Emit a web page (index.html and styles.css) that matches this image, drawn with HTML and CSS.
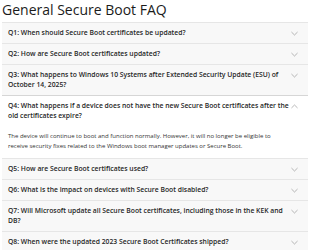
FILE: index.html
```html
<!DOCTYPE html>
<html lang="en">
<head>
<meta charset="utf-8">
<title>General Secure Boot FAQ</title>
<link rel="stylesheet" href="styles.css">
</head>
<body>
<h1 class="title">General Secure Boot FAQ</h1>
<div class="faq">
  <div class="item">
    <div class="q"><span class="qt">Q1: When should Secure Boot certificates be updated?</span><svg class="chev" viewBox="0 0 8 5"><path d="M0.5 0.8 L4 4.2 L7.5 0.8"/></svg></div>
  </div>
  <div class="item">
    <div class="q"><span class="qt">Q2: How are Secure Boot certificates updated?</span><svg class="chev" viewBox="0 0 8 5"><path d="M0.5 0.8 L4 4.2 L7.5 0.8"/></svg></div>
  </div>
  <div class="item">
    <div class="q"><span class="qt">Q3: What happens to Windows 10 Systems after Extended Security Update (ESU) of October 14, 2025?</span><svg class="chev" viewBox="0 0 8 5"><path d="M0.5 0.8 L4 4.2 L7.5 0.8"/></svg></div>
  </div>
  <div class="item open">
    <div class="q"><span class="qt">Q4: What happens if a device does not have the new Secure Boot certificates after the old certificates expire?</span><svg class="chev" viewBox="0 0 8 5"><path d="M0.5 4.2 L4 0.8 L7.5 4.2"/></svg></div>
    <div class="a">The device will continue to boot and function normally. However, it will no longer be eligible to receive security fixes related to the Windows boot manager updates or Secure Boot.</div>
  </div>
  <div class="item">
    <div class="q"><span class="qt">Q5: How are Secure Boot certificates used?</span><svg class="chev" viewBox="0 0 8 5"><path d="M0.5 0.8 L4 4.2 L7.5 0.8"/></svg></div>
  </div>
  <div class="item">
    <div class="q"><span class="qt">Q6: What is the impact on devices with Secure Boot disabled?</span><svg class="chev" viewBox="0 0 8 5"><path d="M0.5 0.8 L4 4.2 L7.5 0.8"/></svg></div>
  </div>
  <div class="item">
    <div class="q"><span class="qt">Q7: Will Microsoft update all Secure Boot certificates, including those in the KEK and DB?</span><svg class="chev" viewBox="0 0 8 5"><path d="M0.5 0.8 L4 4.2 L7.5 0.8"/></svg></div>
  </div>
  <div class="item">
    <div class="q"><span class="qt">Q8: When were the updated 2023 Secure Boot Certificates shipped?</span><svg class="chev" viewBox="0 0 8 5"><path d="M0.5 0.8 L4 4.2 L7.5 0.8"/></svg></div>
  </div>
</div>
</body>
</html>
```
FILE: styles.css
```css
html, body {
  margin: 0;
  padding: 0;
  background: #ffffff;
}
body {
  padding: 0 4px 0 2px;
  font-family: "Open Sans", "Noto Sans", sans-serif;
  color: #1b1b1b;
}
.title {
  margin: 0;
  height: 22px;
  font-size: 14px;
  font-weight: 400;
  line-height: 19px;
}
.faq {
  display: flex;
  flex-direction: column;
}
.item {
  border-top: 1px solid #e6e6e6;
  background: #f8f8f8;
}
.item.open {
  background: #ffffff;
  border-top-color: #d6d6d6;
}
.q {
  display: flex;
  align-items: flex-start;
  gap: 2px;
  padding: 5px 10px 5px 6px;
}
.qt {
  flex: 1;
  font-size: 6.8px;
  font-weight: 580;
  line-height: 10px;
  color: #262626;
}
.chev {
  flex: none;
  width: 7px;
  height: 5px;
  margin-top: 3px;
  fill: none;
  stroke: #8a8a8a;
  stroke-width: 0.7;
}
.a {
  padding: 6px 30px 7px 6px;
  font-size: 6px;
  line-height: 9.5px;
  color: #333333;
}
```
